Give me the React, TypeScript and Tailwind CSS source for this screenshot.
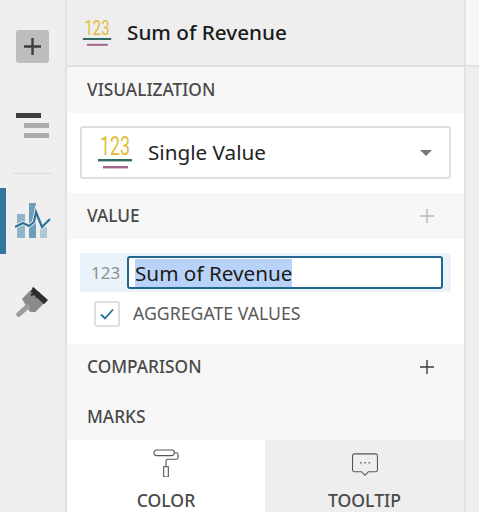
const font = { fontFamily: '"Noto Sans", sans-serif' };

function NumberIcon({ big }: { big?: boolean }) {
  return (
    <svg width={big ? 36 : 30} height={big ? 40 : 34} viewBox="0 0 36 40" fill="none" className="shrink-0 overflow-visible">
      <text x="3" y="22" fontSize="25" fill="#e2bd3a" fontFamily="Roboto, sans-serif" textLength="30" lengthAdjust="spacingAndGlyphs">123</text>
      <rect x="1" y="26" width="34" height="2.4" fill="#2f6b5c" />
      <rect x="6" y="33" width="25" height="2.4" fill="#a3668f" />
    </svg>
  );
}

function Section({ title, plus }: { title: string; plus?: string }) {
  return (
    <div className="flex h-[46px] shrink-0 items-center justify-between bg-[#f7f7f7] pl-[20px] pr-[29px]">
      <span className="text-[17.3px] font-medium leading-[24px] text-[#4a4a4a]">{title}</span>
      {plus && (
        <svg width="16" height="16" viewBox="0 0 16 16" stroke={plus} strokeWidth="1.4">
          <path d="M8 1v14M1 8h14" />
        </svg>
      )}
    </div>
  );
}

export default function App() {
  return (
    <div style={font} className="flex h-[512px] w-[479px] overflow-hidden bg-[#efefef]">
      {/* left rail */}
      <div className="flex w-[67px] shrink-0 flex-col items-center border-r-2 border-[#e2e2e2] bg-[#efefef]">
        <div className="mt-[30px] flex h-[33px] w-[33px] items-center justify-center rounded-[3px] bg-[#bdbdbd]">
          <svg width="17" height="17" viewBox="0 0 17 17" stroke="#3d3d3d" strokeWidth="2.4">
            <path d="M8.5 0v17M0 8.500h17" />
          </svg>
        </div>
        <div className="mt-[50px] flex w-[33px] flex-col items-end">
          <div className="h-[5px] w-[25px] self-start bg-[#3c3c3c]" />
          <div className="mt-[5px] h-[5px] w-[25px] bg-[#ababab]" />
          <div className="mt-[5px] h-[5px] w-[25px] bg-[#ababab]" />
        </div>
        <div className="mt-[35px] h-[1px] w-[39px] bg-[#dcdcdc]" />
        <div className="relative mt-[14px] flex h-[66px] w-full items-center justify-center">
          <div className="absolute left-0 top-0 h-[66px] w-[6px] bg-[#33759b]" />
          <svg width="36" height="38" viewBox="0 0 36 38" className="ml-[1px]">
            <rect x="2" y="12" width="8" height="24" fill="#8fb3c8" />
            <rect x="14" y="1" width="7" height="35" fill="#6f9db8" />
            <rect x="25" y="25" width="7" height="11" fill="#adc8d7" />
            <path d="M0 25l8-4 6 3 5-4 2-10 6 15 8-8" fill="none" stroke="#efefef" strokeWidth="4" />
            <path d="M0 25l8-4 6 3 5-4 2-10 6 15 8-8" fill="none" stroke="#2f7299" strokeWidth="2.2" />
          </svg>
        </div>
        <svg width="34" height="34" viewBox="0 0 34 34" className="mt-[31px]">
          <path d="M6 14l8.700-9 13.300 13.300-8.700 9-5.600-.6z" fill="#8a8a8a" />
          <path d="M17 1.700L32 15l-4 4.300L14.700 6.700z" fill="#2e2e2e" />
          <path d="M14.700 10l7.300-1.700-1.700 4.700" fill="none" stroke="#2e2e2e" strokeWidth="2" />
          <path d="M11.300 21.700L2.700 29.300" stroke="#9c9c9c" strokeWidth="5" strokeLinecap="round" />
        </svg>
      </div>

      {/* panel */}
      <div className="flex w-[399px] shrink-0 flex-col border-r-2 border-[#e2e2e2] bg-white">
        <div className="flex h-[67px] shrink-0 items-center gap-[15px] border-b-2 border-[#e2e2e2] bg-[#eeeeee] pl-[15px]">
          <NumberIcon />
          <span className="text-[20.7px] font-medium text-[#1a1a1a]">Sum of Revenue</span>
        </div>
        <Section title="VISUALIZATION" />
        <div className="flex h-[80px] shrink-0 items-center px-[13px] pb-[1px]">
          <div className="flex h-[53px] w-full items-center rounded-[3px] border-2 border-[#dedede] pl-[15px] pr-[17px]">
            <NumberIcon big />
            <span className="ml-[15px] text-[20.7px] text-[#222]">Single Value</span>
            <div className="ml-auto h-0 w-0 border-x-[6px] border-t-[6px] border-x-transparent border-t-[#777]" />
          </div>
        </div>
        <Section title="VALUE" plus="#b5b5b5" />
        <div className="flex shrink-0 flex-col px-[13px] pt-[14px]">
          <div className="flex h-[39px] items-center bg-[#eaf3f9] pl-[11px] pr-[8px]">
            <span className="w-[36px] shrink-0 text-[17px] text-[#8f8f8f]">123</span>
            <div className="flex h-[33px] flex-1 items-center rounded-[3px] border-2 border-[#23678f] bg-white pl-[6px]">
              <span className="bg-[#b9d3f8] text-[20.7px] leading-[28px] text-[#1a1a1a]">Sum of Revenue</span>
            </div>
          </div>
          <div className="flex h-[43px] items-center pl-[14px]">
            <div className="flex h-[26px] w-[26px] items-center justify-center rounded-[3px] border-2 border-[#dedede] bg-white">
              <svg width="14" height="12" viewBox="0 0 14 12" fill="none" stroke="#23709b" strokeWidth="1.8">
                <path d="M1 6.500l4 4 8-9" />
              </svg>
            </div>
            <span className="ml-[13px] text-[17.700px] text-[#5a5a5a]">AGGREGATE VALUES</span>
          </div>
        </div>
        <div className="mt-[9px]">
          <Section title="COMPARISON" plus="#3d3d3d" />
        </div>
        <div className="flex h-[50px] shrink-0 items-center bg-[#f7f7f7] pl-[20px] pt-[4px]">
          <span className="text-[17.3px] font-medium leading-[24px] text-[#4a4a4a]">MARKS</span>
        </div>
        <div className="flex flex-1">
          <div className="flex w-[198px] flex-col items-center bg-white pt-[9px]">
            <svg width="26" height="28" viewBox="0 0 28 30" fill="none" stroke="#555" strokeWidth="1.2">
              <rect x="1" y="1" width="22" height="6" rx="3" />
              <path d="M23 4h2c1 0 2 .5 2 2v3c0 1-1 2-2 2h-9c-1 0-2 1-2 2v6" />
              <rect x="11.500" y="19" width="5" height="11" />
            </svg>
            <span className="mt-[10px] text-[17.600px] font-medium text-[#4a4a4a]">COLOR</span>
          </div>
          <div className="flex flex-1 flex-col items-center bg-[#eeeeee] pt-[13px]">
            <svg width="28" height="24" viewBox="0 0 30 27" fill="none" stroke="#555" strokeWidth="1.2">
              <path d="M3 1h24c1 0 2 1 2 2v16c0 1-1 2-2 2h-8l-4 4-4-4H3c-1 0-2-1-2-2V3c0-1 1-2 2-2z" />
              <path d="M9.500 11h1.500M14.300 11h1.500M19 11h1.500" strokeWidth="1.500" />
            </svg>
            <span className="mt-[10px] text-[17.600px] font-medium text-[#4a4a4a]">TOOLTIP</span>
          </div>
        </div>
      </div>

      {/* right edge */}
      <div className="flex flex-1 flex-col">
        <div className="h-[67px] border-b-2 border-[#e2e2e2] bg-[#f7f7f7]" />
        <div className="flex-1 bg-[#efefef]" />
      </div>
    </div>
  );
}
